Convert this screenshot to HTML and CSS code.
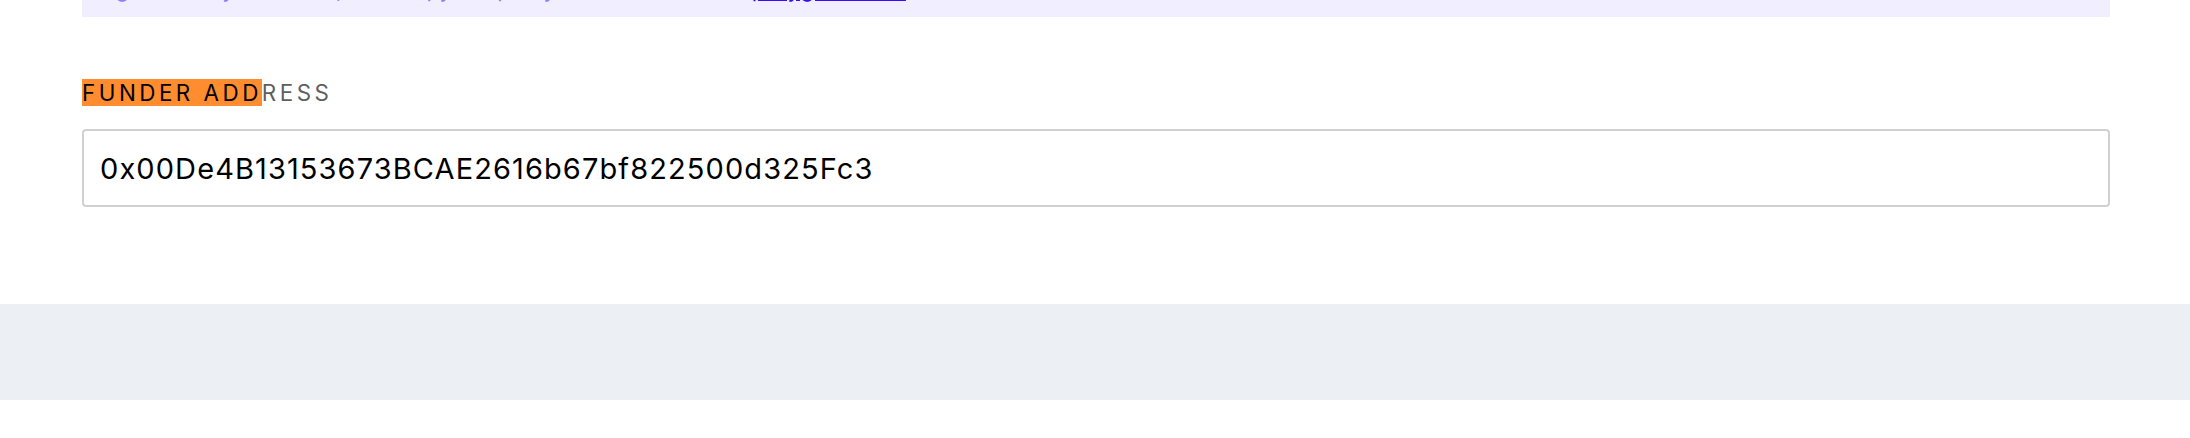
FILE: index.html
```html
<!DOCTYPE html>
<html lang="en">
<head>
<meta charset="utf-8">
<title>Funder address</title>
<link rel="stylesheet" href="styles.css">
</head>
<body>
<div class="page">
  <main class="content">
    <div class="notice">
      <p class="notice-text">Sign in with your wallet, then copy the proxy address shown at <a class="notice-link" href="#">polygonscan.</a></p>
    </div>
    <div class="field">
      <label class="field-label"><span class="mark">FUNDER ADD</span>RESS</label>
      <div class="field-input">0x00De4B13153673BCAE2616b67bf822500d325Fc3</div>
    </div>
  </main>
  <footer class="footer"></footer>
</div>
</body>
</html>
```

FILE: styles.css
```css
html, body {
  margin: 0;
  padding: 0;
  background: #ffffff;
}

body {
  font-family: Inter, "Noto Sans", "Liberation Sans", sans-serif;
  color: #000;
  overflow: hidden;
}

.page {
  margin-top: -40px;
}

.content {
  padding: 0 80px 0 82px;
}

.notice {
  background: #f1efff;
  padding: 16px 24px 14px 14px;
}

.notice-text {
  margin: 0;
  font-size: 22px;
  line-height: 27px;
  color: #8c80ff;
}

.notice-link {
  color: #3a0cff;
  text-decoration: underline;
  letter-spacing: 1.2px;
}

.field {
  display: flex;
  flex-direction: column;
  padding-top: 61px;
  padding-bottom: 97px;
}

.field-label {
  font-size: 22.4px;
  line-height: 30px;
  letter-spacing: 3.5px;
  color: #5f5f5f;
  margin-bottom: 21px;
  display: block;
}

.mark {
  background: #ff8c2e;
  color: #000;
}

.field-input {
  box-sizing: border-box;
  height: 78px;
  border: 2px solid #d0d0d0;
  border-radius: 4px;
  padding: 0 16px;
  display: flex;
  align-items: center;
  font-size: 29px;
  letter-spacing: 1.1px;
  color: #000;
}

.footer {
  height: 96px;
  background: #eceff4;
}
```
